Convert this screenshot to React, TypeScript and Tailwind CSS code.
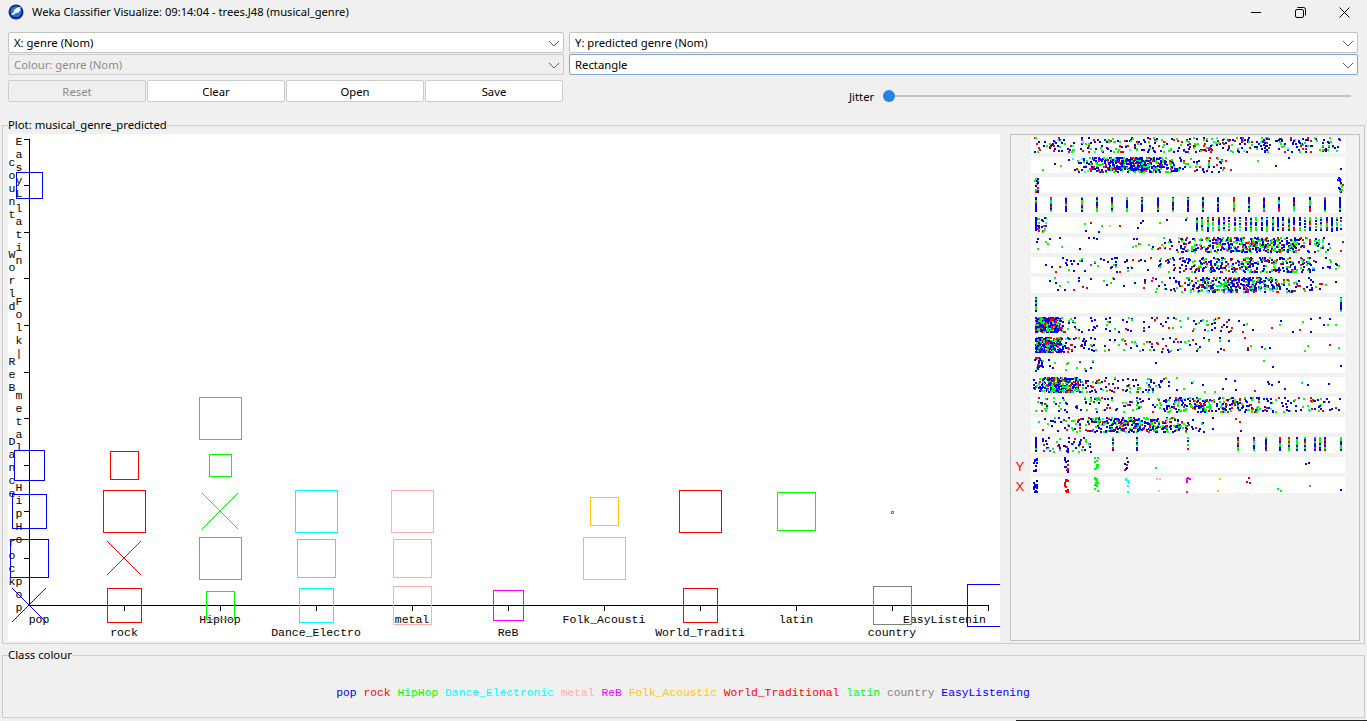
import { useMemo } from "react";

const BLUE = "#0000ff";
const RED = "#ff0000";
const GREEN = "#00ff00";
const CYAN = "#00ffff";
const PINK = "#ffafaf";
const MAGENTA = "#ff00ff";
const ORANGE = "#ffc800";
const GRAY = "#808080";

const classes: [string, string][] = [
  ["pop", BLUE],
  ["rock", RED],
  ["HipHop", GREEN],
  ["Dance_Electronic", CYAN],
  ["metal", PINK],
  ["ReB", MAGENTA],
  ["Folk_Acoustic", ORANGE],
  ["World_Traditional", RED],
  ["latin", GREEN],
  ["country", GRAY],
  ["EasyListening", BLUE],
];

const mono = { fontFamily: '"Liberation Mono", monospace', fontSize: 11.5 };

// cx, cy, half size, colour, cross
type Mark = [number, number, number, string, boolean?];
const marks: Mark[] = [
  [29, 185, 13, BLUE],
  [29, 465, 15, BLUE],
  [29, 511, 17, BLUE],
  [29, 558, 19, BLUE],
  [29, 605, 17, BLUE, true],
  [124, 465, 14, RED],
  [124, 511, 21, RED],
  [124, 558, 17, RED, true],
  [124, 605, 17, RED],
  [220, 418, 21, GREEN],
  [220, 465, 11, GREEN],
  [220, 511, 18, GREEN, true],
  [220, 558, 21, GREEN],
  [220, 605, 14, GREEN],
  [316, 511, 21, CYAN],
  [316, 558, 19, CYAN],
  [316, 605, 17, CYAN],
  [412, 511, 21, PINK],
  [412, 558, 19, PINK],
  [412, 605, 19, PINK],
  [508, 605, 15, MAGENTA],
  [604, 511, 14, ORANGE],
  [604, 558, 21, ORANGE],
  [700, 511, 21, RED],
  [700, 605, 17, RED],
  [796, 511, 19, GREEN],
  [892, 512, 1, GRAY],
  [892, 605, 19, GRAY],
  [988, 605, 21, BLUE],
];

const xTicks = [29, 124, 220, 316, 412, 508, 604, 700, 796, 892, 988];
const yTicks = [558, 511, 465, 418, 372, 325, 278, 232, 185, 139];

const xLabels: [string, number, number][] = [
  ["pop", 39, 623],
  ["rock", 124, 636],
  ["HipHop", 220, 623],
  ["Dance_Electro", 316, 636],
  ["metal", 412, 623],
  ["ReB", 508, 636],
  ["Folk_Acousti", 604, 623],
  ["World_Traditi", 700, 636],
  ["latin", 796, 623],
  ["country", 892, 636],
  ["EasyListenin", 946, 623],
];

// vertical y labels, one character per line: text, x, baseline of first char
const yLabels: [string, number, number][] = [
  ["EasyL", 19, 145],
  ["latin", 19, 212],
  ["Folk|", 19, 305],
  ["count", 12, 166],
  ["World", 12, 258],
  ["ReB", 12, 365],
  ["metal", 19, 399],
  ["Dance", 12, 445],
  ["HipHo", 19, 491],
  ["rock", 12, 546],
  ["pop", 19, 585],
];

function makeRandom(seed: number) {
  let a = seed;
  return () => {
    a = (a + 0x6d2b79f5) | 0;
    let t = Math.imul(a ^ (a >>> 15), 1 | a);
    t = (t + Math.imul(t ^ (t >>> 7), 61 | t)) ^ t;
    return ((t ^ (t >>> 14)) >>> 0) / 4294967296;
  };
}

type Dot = { x: number; y: number; c: string };

function buildDots(): Dot[] {
  const rnd = makeRandom(48213);
  const dots: Dot[] = [];
  const pick = () => {
    const r = rnd();
    if (r < 0.5) return BLUE;
    if (r < 0.8) return GREEN;
    if (r < 0.95) return RED;
    if (r < 0.98) return CYAN;
    if (r < 0.99) return MAGENTA;
    return r < 0.995 ? PINK : ORANGE;
  };
  const put = (row: number, x: number, c?: string, y?: number) => {
    const rx = Math.round(x);
    if (rx < 1033 || rx > 1342) return;
    dots.push({ x: rx, y: 137 + row * 20 + (y ?? Math.floor(rnd() * 15)), c: c ?? pick() });
  };
  const gauss = () => Math.sqrt(-2 * Math.log(rnd() + 1e-6)) * Math.cos(2 * Math.PI * rnd());
  const normal = (row: number, n: number, mean: number, sd: number) => {
    for (let i = 0; i < n * 1.7; i++) put(row, mean + gauss() * sd);
  };
  const flat = (row: number, n: number, from: number, to: number) => {
    for (let i = 0; i < n * 1.7; i++) put(row, from + rnd() * (to - from));
  };
  const decay = (row: number, n: number, from: number, scale: number) => {
    for (let i = 0; i < n * 1.7; i++) put(row, from - Math.log(rnd() + 1e-6) * scale);
  };
  const column = (row: number, x: number, n: number, c?: string) => {
    for (let i = 0; i < n; i++) put(row, x, c ?? pick(), Math.floor((i * 15) / n));
  };
  const wavy = (row: number, x: number, n: number, c: string) => {
    for (let i = 0; i < n; i++) put(row, x + Math.floor(rnd() * 4), c, Math.floor(rnd() * 15));
  };

  flat(0, 215, 1034, 1340);
  normal(1, 210, 1128, 24);
  flat(1, 65, 1075, 1230);
  flat(1, 6, 1036, 1290);
  put(1, 1340);
  flat(2, 10, 1034, 1037);
  flat(2, 10, 1337, 1342);
  for (let k = 0; k < 21; k++) column(3, 1035 + k * 15.2, 8);
  flat(4, 12, 1035, 1045);
  column(4, 1035, 7, BLUE);
  flat(4, 8, 1073, 1190);
  for (let k = 0; k < 27; k++) column(4, 1196 + k * 5.4, 5 + Math.floor(rnd() * 5));
  column(4, 1340, 4);
  normal(5, 230, 1245, 40);
  flat(5, 25, 1130, 1325);
  flat(5, 7, 1035, 1130);
  normal(6, 170, 1240, 45);
  flat(6, 60, 1040, 1335);
  normal(7, 220, 1238, 36);
  flat(7, 35, 1040, 1330);
  column(8, 1035, 8);
  column(8, 1340, 8);
  decay(9, 110, 1035, 10);
  flat(9, 100, 1035, 1060);
  flat(9, 50, 1060, 1250);
  flat(9, 8, 1250, 1340);
  decay(10, 95, 1035, 12);
  flat(10, 85, 1035, 1060);
  flat(10, 50, 1060, 1230);
  flat(10, 6, 1230, 1340);
  flat(11, 14, 1034, 1042);
  flat(11, 8, 1045, 1100);
  put(11, 1155);
  put(11, 1263);
  put(11, 1272);
  put(11, 1340);
  normal(12, 170, 1058, 13);
  flat(12, 50, 1075, 1165);
  flat(12, 13, 1165, 1330);
  flat(13, 130, 1035, 1340);
  normal(13, 100, 1215, 40);
  normal(14, 190, 1130, 34);
  flat(14, 25, 1040, 1240);
  column(15, 1035, 8);
  flat(15, 32, 1042, 1090);
  column(15, 1112, 6);
  column(15, 1136, 6);
  column(15, 1187, 4);
  for (const x of [1237, 1253, 1265, 1279, 1288, 1296, 1304, 1314, 1319, 1324, 1340]) column(15, x, 7);

  for (const [x, c, n] of [
    [1033, BLUE, 11],
    [1064, BLUE, 8],
    [1064, RED, 3],
    [1094, GREEN, 10],
    [1124, BLUE, 4],
    [1124, RED, 3],
  ] as [number, string, number][])
    wavy(16, x, n, c);
  put(16, 1155, GREEN, 10);
  put(16, 1308, BLUE, 5);
  put(16, 1305, BLUE, 6);
  for (const [x, c, n] of [
    [1033, BLUE, 14],
    [1064, RED, 13],
    [1094, GREEN, 13],
    [1125, CYAN, 7],
    [1156, PINK, 3],
    [1186, MAGENTA, 6],
  ] as [number, string, number][])
    wavy(17, x, n, c);
  put(17, 1219, ORANGE, 1);
  put(17, 1217, ORANGE, 13);
  put(17, 1248, RED, 0);
  put(17, 1246, RED, 4);
  put(17, 1249, RED, 5);
  put(17, 1277, GREEN, 11);
  put(17, 1280, GREEN, 13);
  put(17, 1309, GRAY, 8);
  put(17, 1340, BLUE, 12);
  return dots;
}

function Chevron() {
  return (
    <svg width="12" height="7" viewBox="0 0 12 7" className="mr-[3px] shrink-0">
      <path d="M1 1l5 5 5-5" fill="none" stroke="#606060" strokeWidth="1" />
    </svg>
  );
}

function Combo({ label, disabled, focused }: { label: string; disabled?: boolean; focused?: boolean }) {
  return (
    <div
      className={
        "flex h-[21px] items-center justify-between rounded-[2px] border pl-[5px] pt-[2px] text-[11.3px] " +
        (focused
          ? "border-[#7da7d9] bg-white text-black"
          : disabled
            ? "border-[#cccccc] bg-[#efefef] text-[#8c8c8c]"
            : "border-[#c4c4c4] bg-white text-black")
      }
    >
      <span>{label}</span>
      <Chevron />
    </div>
  );
}

function Button({ label, disabled }: { label: string; disabled?: boolean }) {
  return (
    <div
      className={
        "flex h-[22px] w-[138px] items-center justify-center rounded-[2px] border pt-[2px] text-[11.3px] " +
        (disabled ? "border-[#cccccc] bg-[#efefef] text-[#8c8c8c]" : "border-[#cccccc] bg-white text-black")
      }
    >
      {label}
    </div>
  );
}

function PlotChart() {
  return (
    <svg width="992" height="507" viewBox="8 134 992 507" className="block shrink-0 bg-white" shapeRendering="crispEdges">
      <path d="M29.5 139V605.5H988.5" fill="none" stroke="#000" />
      {xTicks.slice(1).map((x) => (
        <path key={x} d={`M${x + 0.5} 605V611`} stroke="#000" />
      ))}
      {yTicks.map((y) => (
        <path key={y} d={`M24 ${y + 0.5}H29`} stroke="#000" />
      ))}
      {xLabels.map(([t, x, y]) => (
        <text
          key={t}
          x={t === "EasyListenin" ? 903 : x}
          y={y}
          textAnchor={t === "EasyListenin" ? "start" : "middle"}
          style={mono}
          fill="#000"
        >
          {t}
        </text>
      ))}
      {yLabels.map(([t, x, y]) =>
        t.split("").map((ch, i) => (
          <text key={t + i} x={x} y={y + i * 13} textAnchor="middle" style={mono} fill="#000">
            {ch}
          </text>
        )),
      )}
      {marks.map(([cx, cy, h, c, cross], i) =>
        cross ? (
          <path
            key={i}
            d={`M${cx - h} ${cy - h}L${cx + h} ${cy + h}M${cx - h} ${cy + h}L${cx + h} ${cy - h}`}
            stroke={c}
            fill="none"
          />
        ) : (
          <rect key={i} x={cx - h + 0.5} y={cy - h + 0.5} width={h * 2} height={h * 2} fill="none" stroke={c} />
        ),
      )}
    </svg>
  );
}

function MatrixChart() {
  const dots = useMemo(buildDots, []);
  const rows = Array.from({ length: 18 }, (_, i) => 137 + i * 20);
  return (
    <svg width="348" height="505" viewBox="1011 135 348 505" className="block" shapeRendering="crispEdges">
      {rows.map((y) => (
        <rect key={y} x="1031" y={y} width="314" height="16" fill="#fff" />
      ))}
      {dots.map((d, i) => (
        <rect key={i} x={d.x} y={d.y} width="2" height="2" fill={d.c} />
      ))}
      <text x="1015.5" y="471" fill="#ff0000" style={{ fontFamily: '"Liberation Sans", sans-serif', fontSize: 13 }}>
        Y
      </text>
      <text x="1015.5" y="491" fill="#ff0000" style={{ fontFamily: '"Liberation Sans", sans-serif', fontSize: 13 }}>
        X
      </text>
    </svg>
  );
}

export default function App() {
  return (
    <div
      className="flex h-[721px] w-[1367px] flex-col overflow-hidden bg-[#f0f0f0] text-black"
      style={{ fontFamily: '"Noto Sans", sans-serif' }}
    >
      {/* title bar */}
      <div className="flex h-[24px] shrink-0 items-center pl-[8px]">
        <svg width="16" height="16" viewBox="0 0 16 16" className="shrink-0">
          <circle cx="8" cy="8" r="7.500" fill="#0b2a86" />
          <circle cx="8" cy="7.500" r="5.500" fill="#2a6fe0" />
          <path d="M3 11l2.500-3 1-2.500 3-2 3.500-.5-1 1.500.5 1.500-2 2.500-2.500.5-2 1.500z" fill="#fff" />
        </svg>
        <span className="ml-[8px] text-[11.15px] whitespace-nowrap">Weka Classifier Visualize: 09:14:04 - trees.J48 (musical_genre)</span>
        <div className="ml-auto mr-px flex items-center">
          <div className="flex h-[22px] w-[44px] items-center justify-center">
            <div className="h-px w-[10px] bg-black" />
          </div>
          <div className="flex h-[22px] w-[44px] items-center justify-center">
            <svg width="11" height="11" viewBox="0 0 11 11">
              <rect x="0.5" y="2.500" width="8" height="8" rx="1.500" fill="none" stroke="#000" />
              <path d="M2.500 .5h6a2 2 0 0 1 2 2v6" fill="none" stroke="#000" />
            </svg>
          </div>
          <div className="flex h-[22px] w-[44px] items-center justify-center">
            <svg width="11" height="11" viewBox="0 0 11 11">
              <path d="M.5 .5l10 10M10.500 .5l-10 10" fill="none" stroke="#000" />
            </svg>
          </div>
        </div>
      </div>

      {/* controls */}
      <div className="mt-[8px] flex shrink-0 gap-[5px] pl-[8px] pr-[9px]">
        <div className="flex w-[556px] flex-col gap-[1px]">
          <Combo label="X: genre (Nom)" />
          <Combo label="Colour: genre (Nom)" disabled />
          <div className="mt-[4px] flex gap-px">
            <Button label="Reset" disabled />
            <Button label="Clear" />
            <Button label="Open" />
            <Button label="Save" />
          </div>
        </div>
        <div className="flex flex-1 flex-col gap-[1px]">
          <Combo label="Y: predicted genre (Nom)" />
          <Combo label="Rectangle" focused />
          <div className="mt-[13px] flex h-[13px] items-center pl-[280px] pr-[7px]">
            <span className="pt-[3px] text-[11.3px]">Jitter</span>
            <div className="ml-[9px] h-[12px] w-[12px] shrink-0 rounded-full bg-[#2384e6]" />
            <div className="h-[2px] flex-1 bg-[#c2c2c2]" />
          </div>
        </div>
      </div>

      {/* plot */}
      <fieldset className="mx-[2px] mt-[15px] h-[527px] shrink-0 border border-[#cccccc] px-[5px] pr-[3px]">
        <legend className="text-[11.3px] leading-[16px]">Plot: musical_genre_predicted</legend>
        <div className="mt-px flex gap-[10px]">
          <PlotChart />
          <div className="h-[507px] w-[350px] border border-[#c0c0c0] bg-[#f2f2f2]">
            <MatrixChart />
          </div>
        </div>
      </fieldset>

      {/* class colour */}
      <fieldset className="mx-[2px] mt-[3px] h-[71px] shrink-0 border border-[#cccccc] px-[5px]">
        <legend className="text-[11.3px] leading-[16px]">Class colour</legend>
        <div
          className="flex justify-center gap-[6.800px] pt-[22px] pr-[1px]"
          style={{ fontFamily: '"Liberation Mono", monospace', fontSize: 11.33 }}
        >
          {classes.map(([name, colour]) => (
            <span key={name} style={{ color: colour }}>
              {name}
            </span>
          ))}
        </div>
      </fieldset>

      <div className="mt-[2px] ml-[1016px] h-px shrink-0 bg-[#222222]" />
    </div>
  );
}
